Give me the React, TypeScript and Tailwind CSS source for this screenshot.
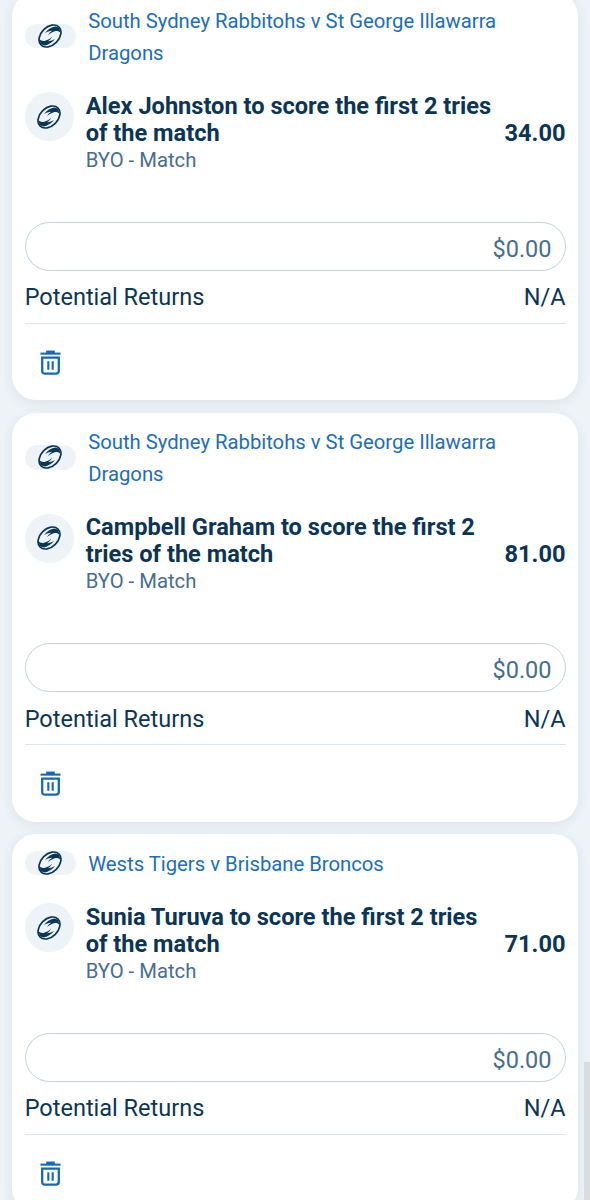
type Bet = {
  id: number;
  event: string[];
  selection: string[];
  market: string;
  odds: string;
};

const bets: Bet[] = [
  {
    id: 1,
    event: ["South Sydney Rabbitohs v St George Illawarra", "Dragons"],
    selection: ["Alex Johnston to score the first 2 tries", "of the match"],
    market: "BYO - Match",
    odds: "34.00",
  },
  {
    id: 2,
    event: ["South Sydney Rabbitohs v St George Illawarra", "Dragons"],
    selection: ["Campbell Graham to score the first 2", "tries of the match"],
    market: "BYO - Match",
    odds: "81.00",
  },
  {
    id: 3,
    event: ["Wests Tigers v Brisbane Broncos"],
    selection: ["Sunia Turuva to score the first 2 tries", "of the match"],
    market: "BYO - Match",
    odds: "71.00",
  },
];

// one half of the ball's seam, drawn twice (the second turned by 180 degrees)
const seam =
  "M7 9C9.800 5.400 13.600 3.200 17.200 2.600l4.200 1.100.9 5C21 7.200 19 6.700 16.800 7.300 14.300 8.100 11.500 9.500 9.800 11.600 10.700 9.500 12.200 7.900 14.200 6.700 11.300 6.800 8.900 7.800 7 9Z";

function RugbyIcon() {
  return (
    <svg viewBox="0 0 24 24" className="size-6 shrink-0" fill="#0b3556">
      <ellipse
        cx="12"
        cy="12"
        rx="12.7"
        ry="8.9"
        transform="rotate(-45 12 12)"
        fill="none"
        stroke="#0b3556"
        strokeWidth="1.7"
      />
      <path d={seam} />
      <path d={seam} transform="rotate(180 12 12)" />
    </svg>
  );
}

function TrashIcon() {
  return (
    <svg viewBox="0 0 22 26" className="h-[25px] w-[21px]" fill="none" stroke="#1568b8">
      <path d="M.5 3.700h21" strokeWidth="2.200" />
      <path d="M6.500 3.700V.500h9v3.200Z" fill="#1568b8" stroke="none" />
      <path d="M2.300 8h17.400v13.700q0 3-3 3h-11.400q-3 0-3-3Z" strokeWidth="2.400" />
      <path d="M8.700 11.700v9M13.300 11.700v9" strokeWidth="2.200" />
    </svg>
  );
}

function BetCard({ bet }: { bet: Bet }) {
  return (
    <article className="rounded-[24px] bg-white px-[12.5px] pt-[14.5px] pb-[25.5px] shadow-[0_3px_12px_rgba(40,80,120,0.09)]">
      <header className="flex items-center">
        <div className="-mt-[3px] flex h-[24.5px] w-[51px] items-center justify-center rounded-full bg-[#edf3f7]">
          <RugbyIcon />
        </div>
        <h2 className="ml-[12.5px] text-[20.25px] leading-[31.5px] whitespace-nowrap text-[#1b6ebc]">
          {bet.event.map((line) => (
            <span key={line} className="block">
              {line}
            </span>
          ))}
        </h2>
      </header>

      <div className="mt-[23.3px] flex h-[129.7px] items-start">
        <div className="flex size-[49px] shrink-0 items-center justify-center rounded-full bg-[#edf3f7] pr-px">
          <RugbyIcon />
        </div>
        <div className="ml-3 flex-1 pt-[0.3px] whitespace-nowrap">
          <h3 className="text-[23.6px] leading-[27px] font-bold text-[#0b3556]">
            {bet.selection.map((line) => (
              <span key={line} className="block">
                {line}
              </span>
            ))}
          </h3>
          <p className="text-[20.25px] leading-[26px] text-[#466d92]">{bet.market}</p>
        </div>
        <span className="mt-[27.3px] text-[23.6px] leading-[27px] font-bold text-[#0b3556]">
          {bet.odds}
        </span>
      </div>

      <input
        readOnly
        placeholder="$0.00"
        className="block h-[49px] w-full rounded-full border border-[#c3d1df] px-[13px] pt-[5px] text-right text-[23.5px] placeholder:text-[#466d92]"
      />
      <div className="flex h-[53px] items-center justify-between border-b border-[#dce5ed] pt-[2px] text-[23.5px] text-[#0b3556]">
        <span>Potential Returns</span>
        <span>N/A</span>
      </div>
      <button className="mt-[26px] ml-[15px] block h-[25px]">
        <TrashIcon />
      </button>
    </article>
  );
}

export default function App() {
  return (
    <main className="relative h-[1200px] w-[590px] overflow-hidden bg-[#edf3f7] font-['Roboto',sans-serif]">
      <div className="-mt-[8.5px] flex flex-col gap-[12.3px] pr-3 pl-[12.2px]">
        {bets.map((bet) => (
          <BetCard key={bet.id} bet={bet} />
        ))}
      </div>
      <div className="absolute right-0 bottom-0 h-[138px] w-[6px] bg-[#dcdbe0]" />
    </main>
  );
}
